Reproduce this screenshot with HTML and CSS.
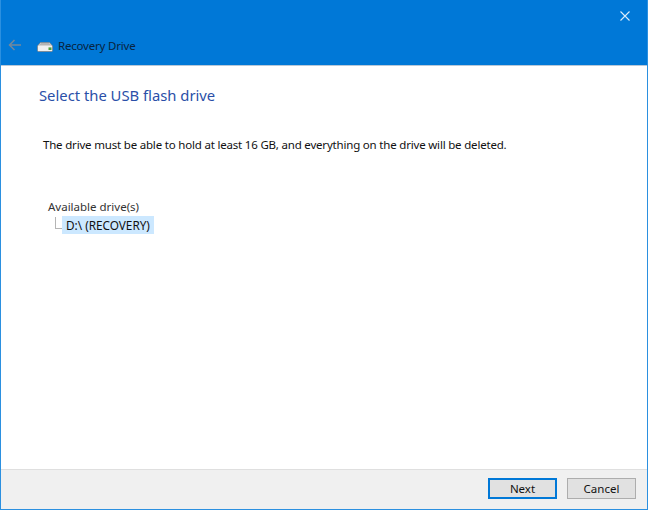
FILE: index.html
```html
<!DOCTYPE html>
<html lang="en">
<head>
<meta charset="utf-8">
<title>Recovery Drive</title>
<link rel="stylesheet" href="styles.css">
</head>
<body>
<div class="window">
  <div class="titlebar">
    <div class="close-row">
      <svg class="close" width="10" height="10" viewBox="0 0 10 10"><path d="M0.5 0.5L9.5 9.5M9.5 0.5L0.5 9.5" stroke="#dcecfa" stroke-width="1.1" fill="none"/></svg>
    </div>
    <div class="nav-row">
      <svg class="back" width="14" height="12" viewBox="0 0 14 12"><path d="M13 6H1.5M6.5 1L1.5 6L6.5 11" stroke="#74889c" stroke-width="1.5" fill="none"/></svg>
      <svg class="drive" width="16" height="10" viewBox="0 0 16 10">
        <path d="M3.5 0.5H12.5L15.5 4V8.5Q15.5 9.5 14.5 9.5H1.5Q0.5 9.5 0.5 8.5V4Z" fill="#f0f0f0" stroke="#7c7c7c" stroke-width="0.7"/>
        <path d="M3.8 1H12.2L14.5 3.6H1.5Z" fill="#b4b4b4"/>
        <rect x="11.5" y="5.4" width="3" height="2.6" fill="#4fa03a"/>
      </svg>
      <span class="app-name">Recovery Drive</span>
    </div>
  </div>
  <main class="content">
    <h1 class="heading">Select the USB flash drive</h1>
    <p class="message">The drive must be able to hold at least 16 GB, and everything on the drive will be deleted.</p>
    <div class="tree">
      <div class="tree-root">Available drive(s)</div>
      <div class="tree-item">
        <span class="connector"></span>
        <span class="item-label">D:\ (RECOVERY)</span>
      </div>
    </div>
  </main>
  <footer class="footer">
    <button class="btn btn-default">Next</button>
    <button class="btn">Cancel</button>
  </footer>
</div>
</body>
</html>
```
FILE: styles.css
```css
* { box-sizing: border-box; }
html, body { margin: 0; padding: 0; height: 100%; }
body { font-family: "Noto Sans", "Open Sans", sans-serif; font-size: 11.5px; color: #111; background: #fff; }
.window { width: 648px; height: 510px; display: flex; flex-direction: column; border: 1px solid #2b90e0; border-top: 0; overflow: hidden; }
.titlebar { height: 66px; margin: 0 -1px; background: #0078d7; border-bottom: 1px solid #b8c8d8; display: flex; flex-direction: column; flex: none; }
.close-row { height: 31px; display: flex; justify-content: flex-end; padding: 11px 18px 0 0; }
.nav-row { display: flex; align-items: center; padding-left: 8px; height: 28px; }
.back { margin-right: 15px; }
.drive { margin-right: 5px; margin-top: 3px; }
.app-name { color: #08243f; font-size: 11.5px; letter-spacing: -0.2px; }
.content { flex: 1; padding: 18px 0 0 38px; }
.heading { margin: 0; font-size: 14.8px; font-weight: 400; color: #2a4fa8; line-height: 22px; }
.message { margin: 31px 0 0 4px; line-height: 16px; letter-spacing: -0.19px; }
.tree { margin: 46px 0 0 9px; }
.tree-root { line-height: 16px; color: #333; }
.tree-item { display: flex; height: 18px; margin-top: 1px; margin-left: 7px; }
.connector { width: 7px; height: 12px; margin-top: 1px; border-left: 1px solid #b5b5b5; border-bottom: 1px solid #b5b5b5; flex: none; }
.item-label { background: #cce8ff; padding: 0 4px; line-height: 18px; width: 92px; white-space: nowrap; font-size: 11.8px; letter-spacing: -0.02px; }
.footer { flex: none; height: 40px; background: #f0f0f0; border-top: 1px solid #dfdfdf; display: flex; justify-content: flex-end; gap: 10px; padding: 8px 11px 0 0; }
.btn { width: 69px; height: 21px; background: #e1e1e1; border: 1px solid #adadad; font: inherit; color: #111; padding: 0; }
.btn-default { border: 2px solid #0078d7; }
```
